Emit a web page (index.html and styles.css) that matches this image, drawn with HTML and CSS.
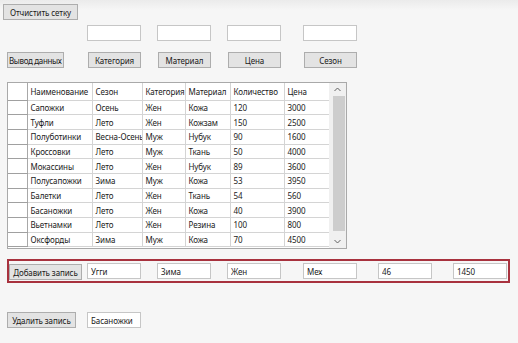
FILE: index.html
```html
<!DOCTYPE html>
<html lang="ru">
<head>
  <meta charset="UTF-8">
  <meta name="viewport" content="width=device-width, initial-scale=1">
  <title>Обувь</title>
  <link rel="stylesheet" href="styles.css">
</head>
<body>
  <div class="page">
    <button class="btn btn-clear">Отчистить сетку</button>

    <!-- фильтры -->
    <div class="cols filters">
      <span></span>
      <input type="text" class="field">
      <input type="text" class="field">
      <input type="text" class="field">
      <input type="text" class="field">
    </div>

    <div class="cols sorts">
      <button class="btn btn-clip"><span>Вывод данных</span></button>
      <button class="btn">Категория</button>
      <button class="btn">Материал</button>
      <button class="btn">Цена</button>
      <button class="btn">Сезон</button>
    </div>

    <!-- таблица -->
    <div class="grid">
      <div class="grid-body">
        <table>
          <colgroup>
            <col class="c-head">
            <col class="c-name">
            <col class="c-season">
            <col class="c-cat">
            <col class="c-mat">
            <col class="c-qty">
            <col class="c-price">
          </colgroup>
          <thead>
            <tr>
              <th class="rh"></th>
              <th>Наименование</th>
              <th>Сезон</th>
              <th>Категория</th>
              <th>Материал</th>
              <th>Количество</th>
              <th>Цена</th>
            </tr>
          </thead>
          <tbody>
            <tr><td class="rh"></td><td>Сапожки</td><td>Осень</td><td>Жен</td><td>Кожа</td><td>120</td><td>3000</td></tr>
            <tr><td class="rh"></td><td>Туфли</td><td>Лето</td><td>Жен</td><td>Кожзам</td><td>150</td><td>2500</td></tr>
            <tr><td class="rh"></td><td>Полуботинки</td><td>Весна-Осень</td><td>Муж</td><td>Нубук</td><td>90</td><td>1600</td></tr>
            <tr><td class="rh"></td><td>Кроссовки</td><td>Лето</td><td>Муж</td><td>Ткань</td><td>50</td><td>4000</td></tr>
            <tr><td class="rh"></td><td>Мокассины</td><td>Лето</td><td>Жен</td><td>Нубук</td><td>89</td><td>3600</td></tr>
            <tr><td class="rh"></td><td>Полусапожки</td><td>Зима</td><td>Муж</td><td>Кожа</td><td>53</td><td>3950</td></tr>
            <tr><td class="rh"></td><td>Балетки</td><td>Лето</td><td>Жен</td><td>Ткань</td><td>54</td><td>560</td></tr>
            <tr><td class="rh"></td><td>Басаножки</td><td>Лето</td><td>Жен</td><td>Кожа</td><td>40</td><td>3900</td></tr>
            <tr><td class="rh"></td><td>Вьетнамки</td><td>Лето</td><td>Жен</td><td>Резина</td><td>100</td><td>800</td></tr>
            <tr><td class="rh"></td><td>Оксфорды</td><td>Зима</td><td>Муж</td><td>Кожа</td><td>70</td><td>4500</td></tr>
          </tbody>
        </table>
      </div>
      <div class="scrollbar">
        <div class="arrow">
          <svg width="7" height="5" viewBox="0 0 7 5"><path d="M0.5 4 L3.5 1 L6.5 4" fill="none" stroke="#606060" stroke-width="1"/></svg>
        </div>
        <div class="track"><div class="thumb"></div></div>
        <div class="arrow">
          <svg width="7" height="5" viewBox="0 0 7 5"><path d="M0.5 1 L3.5 4 L6.5 1" fill="none" stroke="#606060" stroke-width="1"/></svg>
        </div>
      </div>
    </div>

    <!-- добавление -->
    <div class="cols add-panel">
      <button class="btn btn-add">Добавить запись</button>
      <input type="text" class="field" value="Угги">
      <input type="text" class="field" value="Зима">
      <input type="text" class="field" value="Жен">
      <input type="text" class="field" value="Мех">
      <input type="text" class="field" value="46">
      <input type="text" class="field" value="1450">
    </div>

    <div class="cols remove">
      <button class="btn btn-remove">Удалить запись</button>
      <input type="text" class="field" value="Басаножки">
    </div>
  </div>
</body>
</html>
```

FILE: styles.css
```css
* {
  box-sizing: border-box;
}

body {
  margin: 0;
  width: 518px;
  height: 343px;
  overflow: hidden;
  font-family: 'Noto Sans', 'Open Sans', sans-serif;
  font-size: 8px;
  letter-spacing: -0.1px;
  color: #1a1a1a;
  background: linear-gradient(to bottom, #ebebeb, #f6f6f6 10px);
}

.page {
  padding: 4px 0 0 7px;
}

.btn {
  display: flex;
  align-items: center;
  justify-content: center;
  height: 16px;
  padding: 0 2px;
  font-family: inherit;
  font-size: 8px;
  letter-spacing: inherit;
  color: #1a1a1a;
  background: #e3e3e3;
  border: 1px solid #adadad;
  white-space: nowrap;
  overflow: hidden;
}

.btn-clear {
  width: 75px;
  margin-left: -4px;
}

.field {
  height: 16px;
  padding: 0 3px;
  font-family: inherit;
  font-size: 8px;
  letter-spacing: inherit;
  color: #1a1a1a;
  background: #fff;
  border: 1px solid #c6c6c6;
  outline: none;
}

/* общие колонки для полей и кнопок */
.cols {
  display: grid;
  grid-template-columns: 80px 70px 70px 76px 75px 75px 57px;
  align-items: start;
}

.cols .field {
  width: 54px;
}

.filters {
  margin-top: 5px;
}

.sorts {
  margin-top: 11px;
}

.sorts .btn {
  width: 53px;
  margin-left: 1px;
}

.sorts .btn-clip {
  width: 57px;
  margin-left: 0;
  padding: 0 1px;
  justify-content: flex-start;
}

.btn-clip span {
  letter-spacing: -0.35px;
}

/* таблица */
.grid {
  display: flex;
  width: 340px;
  height: 167px;
  margin-top: 14px;
  background: #fff;
  border: 1px solid #a9a9a9;
}

.grid-body {
  flex: 1;
  overflow: hidden;
}

table {
  border-collapse: collapse;
  table-layout: fixed;
  width: 321px;
}

.c-head { width: 19px; }
.c-name { width: 65px; }
.c-season { width: 50px; }
.c-cat { width: 43px; }
.c-mat { width: 45px; }
.c-qty { width: 54px; }
.c-price { width: 45px; }

th,
td {
  padding: 0 0 0 3px;
  font-weight: normal;
  text-align: left;
  white-space: nowrap;
  overflow: hidden;
  border-right: 1px solid #d4d4d4;
  border-bottom: 1px solid #d4d4d4;
}

th {
  height: 17px;
}

td {
  height: 14.7px;
}

.rh {
  border-right: 1px solid #a8a8a8;
  border-bottom: 1px solid #a0a0a0;
}

.scrollbar {
  display: flex;
  flex-direction: column;
  width: 17px;
  background: #f0f0f0;
}

.arrow {
  display: flex;
  align-items: center;
  justify-content: center;
  height: 13px;
}

.track {
  flex: 1;
  padding: 0 1px 4px 4px;
}

.thumb {
  height: 100%;
  background: #cdcdcd;
}

/* добавление записи */
.add-panel {
  width: 503px;
  height: 24px;
  margin-top: 10px;
  padding-top: 2px;
  grid-template-columns: 78px 70px 70px 76px 75px 75px 54px;
  border: 2px solid #a8323e;
}

.add-panel .btn-add {
  width: 73px;
  margin-top: 1px;
}

.remove {
  margin-top: 29px;
}

.remove .btn-remove {
  width: 69px;
}
```
